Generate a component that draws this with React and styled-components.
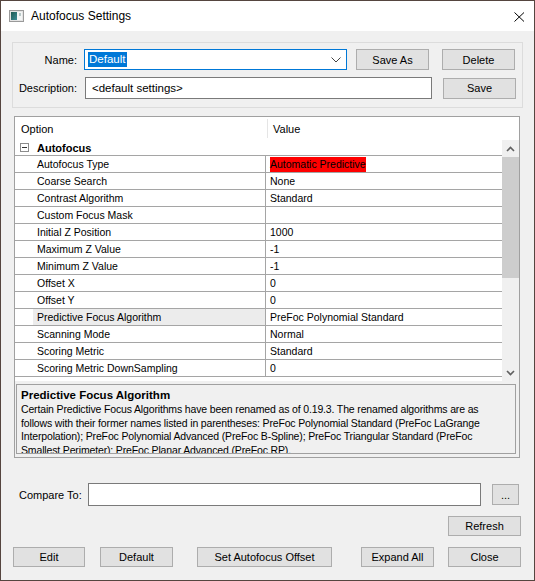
import React from "react";
import styled, { createGlobalStyle } from "styled-components";

const GlobalStyle = createGlobalStyle`
  * { box-sizing: border-box; }
  body {
    margin: 0;
    background: #f0f0f0;
    font-family: "Liberation Sans", Arial, sans-serif;
  }
`;

const rows = [
  { name: "Autofocus Type", value: "Automatic Predictive", flagged: true },
  { name: "Coarse Search", value: "None" },
  { name: "Contrast Algorithm", value: "Standard" },
  { name: "Custom Focus Mask", value: "" },
  { name: "Initial Z Position", value: "1000" },
  { name: "Maximum Z Value", value: "-1" },
  { name: "Minimum Z Value", value: "-1" },
  { name: "Offset X", value: "0" },
  { name: "Offset Y", value: "0" },
  { name: "Predictive Focus Algorithm", value: "PreFoc Polynomial Standard", selected: true },
  { name: "Scanning Mode", value: "Normal" },
  { name: "Scoring Metric", value: "Standard" },
  { name: "Scoring Metric DownSampling", value: "0" },
];

const App = () => {
  return (
    <>
      <GlobalStyle />
      <Window>
        <TitleBar>
          <AppIcon />
          <Title>Autofocus Settings</Title>
          <CloseBox>
            <svg width="11" height="10" viewBox="0 0 11 10">
              <path d="M0.5 0.5 L10 9.5 M10 0.5 L0.5 9.5" stroke="#000" strokeWidth="1" />
            </svg>
          </CloseBox>
        </TitleBar>

        <Body>
          <GroupBox>
            <FieldRow>
              <FieldLabel>Name:</FieldLabel>
              <Combo>
                <Selected>Default</Selected>
                <svg width="10" height="6" viewBox="0 0 10 6">
                  <path d="M0.5 0.5 L5 5 L9.5 0.5" fill="none" stroke="#444" strokeWidth="1" />
                </svg>
              </Combo>
              <Btn $w={73} $h={21} $ml={9}>Save As</Btn>
              <Btn $w={73} $h={21} $ml={13}>Delete</Btn>
            </FieldRow>
            <FieldRow $mt={7}>
              <FieldLabel>Description:</FieldLabel>
              <TextBox $w={347} $ml={8}>&lt;default settings&gt;</TextBox>
              <Btn $w={73} $h={21} $ml={11}>Save</Btn>
            </FieldRow>
          </GroupBox>

          <Grid>
            <GridHeader>
              <HeadCell>Option</HeadCell>
              <HeadCell $value>Value</HeadCell>
            </GridHeader>
            <GridBody>
              <RowList>
                <CategoryRow>
                  <MinusBox />
                  <CategoryName>Autofocus</CategoryName>
                </CategoryRow>
                {rows.map((r) => (
                  <PropRow key={r.name}>
                    <Margin />
                    <NameCell $selected={r.selected}>{r.name}</NameCell>
                    <ValueCell>
                      {r.flagged ? <Flag>{r.value}</Flag> : r.value}
                    </ValueCell>
                  </PropRow>
                ))}
              </RowList>
              <ScrollBar>
                <ArrowBox>
                  <svg width="9" height="6" viewBox="0 0 9 6">
                    <path d="M1 5 L4.5 1.5 L8 5" fill="none" stroke="#606060" strokeWidth="1.6" />
                  </svg>
                </ArrowBox>
                <Thumb />
                <Track />
                <ArrowBox>
                  <svg width="9" height="6" viewBox="0 0 9 6">
                    <path d="M1 1 L4.5 4.5 L8 1" fill="none" stroke="#606060" strokeWidth="1.6" />
                  </svg>
                </ArrowBox>
              </ScrollBar>
            </GridBody>
            <HelpPanel>
              <HelpTitle>Predictive Focus Algorithm</HelpTitle>
              <HelpText>
                Certain Predictive Focus Algorithms have been renamed as of 0.19.3. The renamed
                algorithms are as follows with their former names listed in parentheses: PreFoc
                Polynomial Standard (PreFoc LaGrange Interpolation); PreFoc Polynomial Advanced
                (PreFoc B-Spline); PreFoc Triangular Standard (PreFoc Smallest Perimeter); PreFoc
                Planar Advanced (PreFoc RP).
              </HelpText>
            </HelpPanel>
          </Grid>

          <CompareRow>
            <CompareLabel>Compare To:</CompareLabel>
            <TextBox $w={393} $h={23} $ml={8} />
            <Btn $w={27} $h={21} $ml={11}>...</Btn>
          </CompareRow>

          <RefreshRow>
            <Btn $w={73} $h={20}>Refresh</Btn>
          </RefreshRow>

          <ButtonBar>
            <Btn $w={72} $h={20} $ml={12}>Edit</Btn>
            <Btn $w={73} $h={20} $ml={15}>Default</Btn>
            <Btn $w={135} $h={20} $ml={24}>Set Autofocus Offset</Btn>
            <Btn $w={73} $h={20} $ml={29}>Expand All</Btn>
            <Btn $w={73} $h={20} $ml={14}>Close</Btn>
          </ButtonBar>
        </Body>
      </Window>
    </>
  );
};

export default App;

const AppIcon = () => (
  <svg width="15" height="12" viewBox="0 0 15 12">
    <defs>
      <linearGradient id="pic" x1="0" y1="0" x2="1" y2="1">
        <stop offset="0" stopColor="#1e5a52" />
        <stop offset="1" stopColor="#3d8c96" />
      </linearGradient>
    </defs>
    <rect x="0.5" y="0.5" width="14" height="11" fill="#e4e4e4" stroke="#9a9a9a" />
    <rect x="2" y="2" width="6" height="8" fill="url(#pic)" />
    <rect x="8" y="2" width="5" height="8" fill="#f4f6f6" />
    <rect x="10" y="3" width="2" height="3" fill="#b9c8c8" />
  </svg>
);

const Window = styled.div`
  width: 535px;
  height: 581px;
  border: 1px solid #55453f;
  background: #f0f0f0;
  display: flex;
  flex-direction: column;
  font-size: 11px;
  color: #000;
  overflow: hidden;
`;

const TitleBar = styled.div`
  height: 30px;
  background: #fff;
  display: flex;
  align-items: center;
  padding-left: 8px;
  flex-shrink: 0;
`;

const Title = styled.span`
  margin-left: 7px;
  font-size: 12px;
  color: #000;
`;

const CloseBox = styled.div`
  margin-left: auto;
  margin-right: 9px;
  display: flex;
  align-items: center;
  padding-top: 1px;
`;

const Body = styled.div`
  display: flex;
  flex-direction: column;
  flex: 1;
`;

const GroupBox = styled.div`
  margin: 11px 0 0 11px;
  width: 511px;
  height: 66px;
  border: 1px solid #dcdcdc;
  padding-top: 6px;
`;

const FieldRow = styled.div`
  display: flex;
  align-items: center;
  margin-top: ${(p) => p.$mt || 0}px;
`;

const FieldLabel = styled.div`
  width: 64px;
  text-align: right;
  font-size: 11px;
  white-space: nowrap;
`;

const Combo = styled.div`
  margin-left: 7px;
  width: 263px;
  height: 21px;
  border: 1px solid #0078d7;
  background: #fff;
  display: flex;
  align-items: center;
  justify-content: space-between;
  padding: 0 5px 0 3px;
`;

const Selected = styled.span`
  background: #0078d7;
  color: #fff;
  padding: 1px 2px 1px 1px;
  line-height: 13px;
  font-size: 11.5px;
`;

const TextBox = styled.div`
  margin-left: ${(p) => p.$ml || 0}px;
  width: ${(p) => p.$w}px;
  height: ${(p) => p.$h || 22}px;
  border: 1px solid #7a7a7a;
  background: #fff;
  display: flex;
  align-items: center;
  padding-left: 6px;
  font-size: 11.5px;
`;

const Btn = styled.button`
  margin-left: ${(p) => p.$ml || 0}px;
  width: ${(p) => p.$w}px;
  height: ${(p) => p.$h}px;
  flex-shrink: 0;
  border: 1px solid #adadad;
  background: #e1e1e1;
  font-family: "Liberation Sans", Arial, sans-serif;
  font-size: 11px;
  color: #000;
  padding: 0;
  border-radius: 0;
`;

const Grid = styled.div`
  margin: 8px 0 0 13px;
  width: 506px;
  height: 342px;
  border: 1px solid #a0a0a0;
  background: #f0f0f0;
  display: flex;
  flex-direction: column;
`;

const GridHeader = styled.div`
  height: 23px;
  background: #fff;
  display: grid;
  grid-template-columns: 252px 1fr;
  align-items: center;
  flex-shrink: 0;
`;

const HeadCell = styled.div`
  height: 19px;
  display: flex;
  align-items: center;
  padding-left: ${(p) => (p.$value ? 5 : 6)}px;
  border-left: ${(p) => (p.$value ? "1px solid #e5e5e5" : "none")};
  font-size: 11px;
`;

const GridBody = styled.div`
  height: 241px;
  display: flex;
  flex-shrink: 0;
`;

const RowList = styled.div`
  width: 487px;
  background: #fff;
  overflow: hidden;
`;

const CategoryRow = styled.div`
  height: 16px;
  border-bottom: 1px solid #a5a5a5;
  display: flex;
  align-items: center;
  padding-left: 5px;
`;

const MinusBox = styled.div`
  width: 9px;
  height: 9px;
  border: 1px solid #8c8c8c;
  position: relative;
  &::after {
    content: "";
    position: absolute;
    left: 1px;
    right: 1px;
    top: 3px;
    height: 1px;
    background: #333;
  }
`;

const CategoryName = styled.span`
  margin-left: 8px;
  font-weight: bold;
  font-size: 11px;
`;

const PropRow = styled.div`
  height: 17px;
  border-bottom: 1px solid #a5a5a5;
  display: grid;
  grid-template-columns: 18px 233px 1fr;
  font-size: 10.5px;
`;

const Margin = styled.div``;

const NameCell = styled.div`
  background: ${(p) => (p.$selected ? "#ececec" : "#fff")};
  border-right: 1px solid #a5a5a5;
  padding-left: 4px;
  display: flex;
  align-items: center;
  white-space: nowrap;
`;

const ValueCell = styled.div`
  padding-left: 4px;
  display: flex;
  align-items: center;
  white-space: nowrap;
`;

const Flag = styled.span`
  background: #ff0000;
  color: #000;
  padding: 1px 0;
  line-height: 13px;
`;

const ScrollBar = styled.div`
  width: 17px;
  background: #f0f0f0;
  display: flex;
  flex-direction: column;
`;

const ArrowBox = styled.div`
  height: 17px;
  display: flex;
  align-items: center;
  justify-content: center;
`;

const Thumb = styled.div`
  height: 121px;
  background: #cdcdcd;
`;

const Track = styled.div`
  flex: 1;
`;

const HelpPanel = styled.div`
  margin: 3px 0 0 1px;
  width: 500px;
  height: 70px;
  border: 1px solid #a0a0a0;
  padding: 3px 4px 0 4px;
  overflow: hidden;
`;

const HelpTitle = styled.div`
  font-weight: bold;
  font-size: 11.5px;
  line-height: 14px;
`;

const HelpText = styled.div`
  font-size: 10.5px;
  letter-spacing: -0.15px;
  line-height: 13.5px;
  margin-top: 1px;
`;

const CompareRow = styled.div`
  margin-top: 25px;
  display: flex;
  align-items: center;
  padding-left: 18px;
`;

const CompareLabel = styled.div`
  font-size: 11px;
  width: 61px;
  white-space: nowrap;
`;

const RefreshRow = styled.div`
  margin-top: 10px;
  display: flex;
  justify-content: flex-end;
  padding-right: 13px;
`;

const ButtonBar = styled.div`
  margin-top: 11px;
  display: flex;
  align-items: center;
`;
